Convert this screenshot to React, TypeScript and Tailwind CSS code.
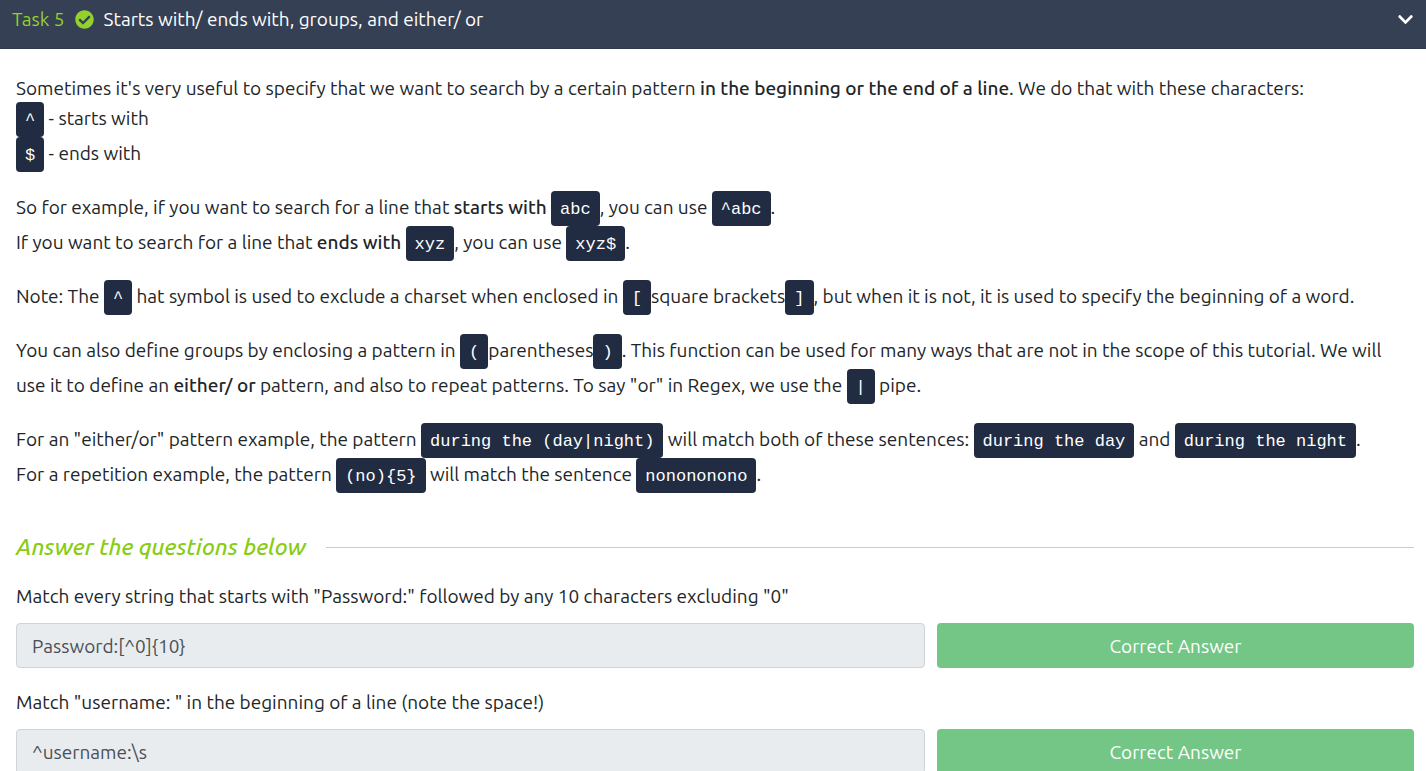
import type { ReactNode } from "react";
import { FaCheckCircle, FaChevronDown } from "react-icons/fa";

function Code({ children }: { children: ReactNode }) {
  return (
    <code className="inline-block rounded bg-[#212c42] px-[9px] pt-[3px] pb-px align-baseline font-['Liberation_Mono',monospace] text-[17px] leading-[31px] text-white">
      {children}
    </code>
  );
}

function Strong({ children }: { children: ReactNode }) {
  return <strong className="font-medium">{children}</strong>;
}

type Question = { id: string; label: string; answer: string };

const questions: Question[] = [
  {
    id: "password",
    label: 'Match every string that starts with "Password:" followed by any 10 characters excluding "0"',
    answer: "Password:[^0]{10}",
  },
  {
    id: "username",
    label: 'Match "username: " in the beginning of a line (note the space!)',
    answer: "^username:\\s",
  },
];

function QuestionRow({ id, label, answer }: Question) {
  return (
    <div className="mb-5">
      <label htmlFor={id} className="mb-[13px] block leading-7">
        {label}
      </label>
      <div className="grid grid-cols-[909fr_477fr] gap-3">
        <input
          id={id}
          defaultValue={answer}
          readOnly
          className="h-[45px] min-w-0 rounded border border-[#ced4da] bg-[#e9ecef] px-[15px] text-[#495057]"
        />
        <button type="button" className="h-[45px] rounded bg-[#74c687] text-white">
          Correct Answer
        </button>
      </div>
    </div>
  );
}

export default function App() {
  return (
    <div className="h-screen overflow-hidden bg-white font-[Ubuntu,'Noto_Sans',sans-serif] text-[19px] leading-7 text-[#212529]">
      <header className="flex items-center border-b border-[#2f3a4e] bg-[#364055] pt-[5px] pr-3 pb-[15px] pl-3 text-white">
        <h1 className="flex items-center gap-[10px]">
          <span className="text-[#93d12b]">Task 5</span>
          <FaCheckCircle className="size-[19px] text-[#93d12b]" />
          <span>Starts with/ ends with, groups, and either/ or</span>
        </h1>
        <button type="button" aria-label="Collapse task" className="ml-auto">
          <FaChevronDown className="size-[17px]" />
        </button>
      </header>
      <main className="pt-[25px] pr-3 pl-4">
        <div className="flex flex-col gap-[19px]">
          <p>
            Sometimes it's very useful to specify that we want to search by a certain pattern{" "}
            <Strong>in the beginning or the end of a line</Strong>. We do that with these characters:
            <br />
            <Code>^</Code> - starts with
            <br />
            <Code>$</Code> - ends with
          </p>
          <p>
            So for example, if you want to search for a line that <Strong>starts with</Strong> <Code>abc</Code>, you can
            use <Code>^abc</Code>.
            <br />
            If you want to search for a line that <Strong>ends with</Strong> <Code>xyz</Code>, you can use{" "}
            <Code>xyz$</Code>.
          </p>
          <p>
            Note: The <Code>^</Code> hat symbol is used to exclude a charset when enclosed in <Code>[</Code>square
            brackets<Code>]</Code>, but when it is not, it is used to specify the beginning of a word.
          </p>
          <p>
            You can also define groups by enclosing a pattern in <Code>(</Code>parentheses<Code>)</Code>. This function
            can be used for many ways that are not in the scope of this tutorial. We will use it to define an{" "}
            <Strong>either/ or</Strong> pattern, and also to repeat patterns. To say "or" in Regex, we use the{" "}
            <Code>|</Code> pipe.
          </p>
          <p>
            For an "either/or" pattern example, the pattern <Code>during the (day|night)</Code> will match both of these
            sentences: <Code>during the day</Code> and <Code>during the night</Code>.
            <br />
            For a repetition example, the pattern <Code>(no){"{5}"}</Code> will match the sentence{" "}
            <Code>nonononono</Code>.
          </p>
        </div>
        <div className="mt-10 mb-[21px] flex items-center gap-5">
          <h2 className="text-[23px] leading-7 font-medium text-[#88cc14] italic">Answer the questions below</h2>
          <hr className="flex-1 border-[#cccccc]" />
        </div>
        {questions.map((q) => (
          <QuestionRow key={q.id} {...q} />
        ))}
      </main>
    </div>
  );
}
